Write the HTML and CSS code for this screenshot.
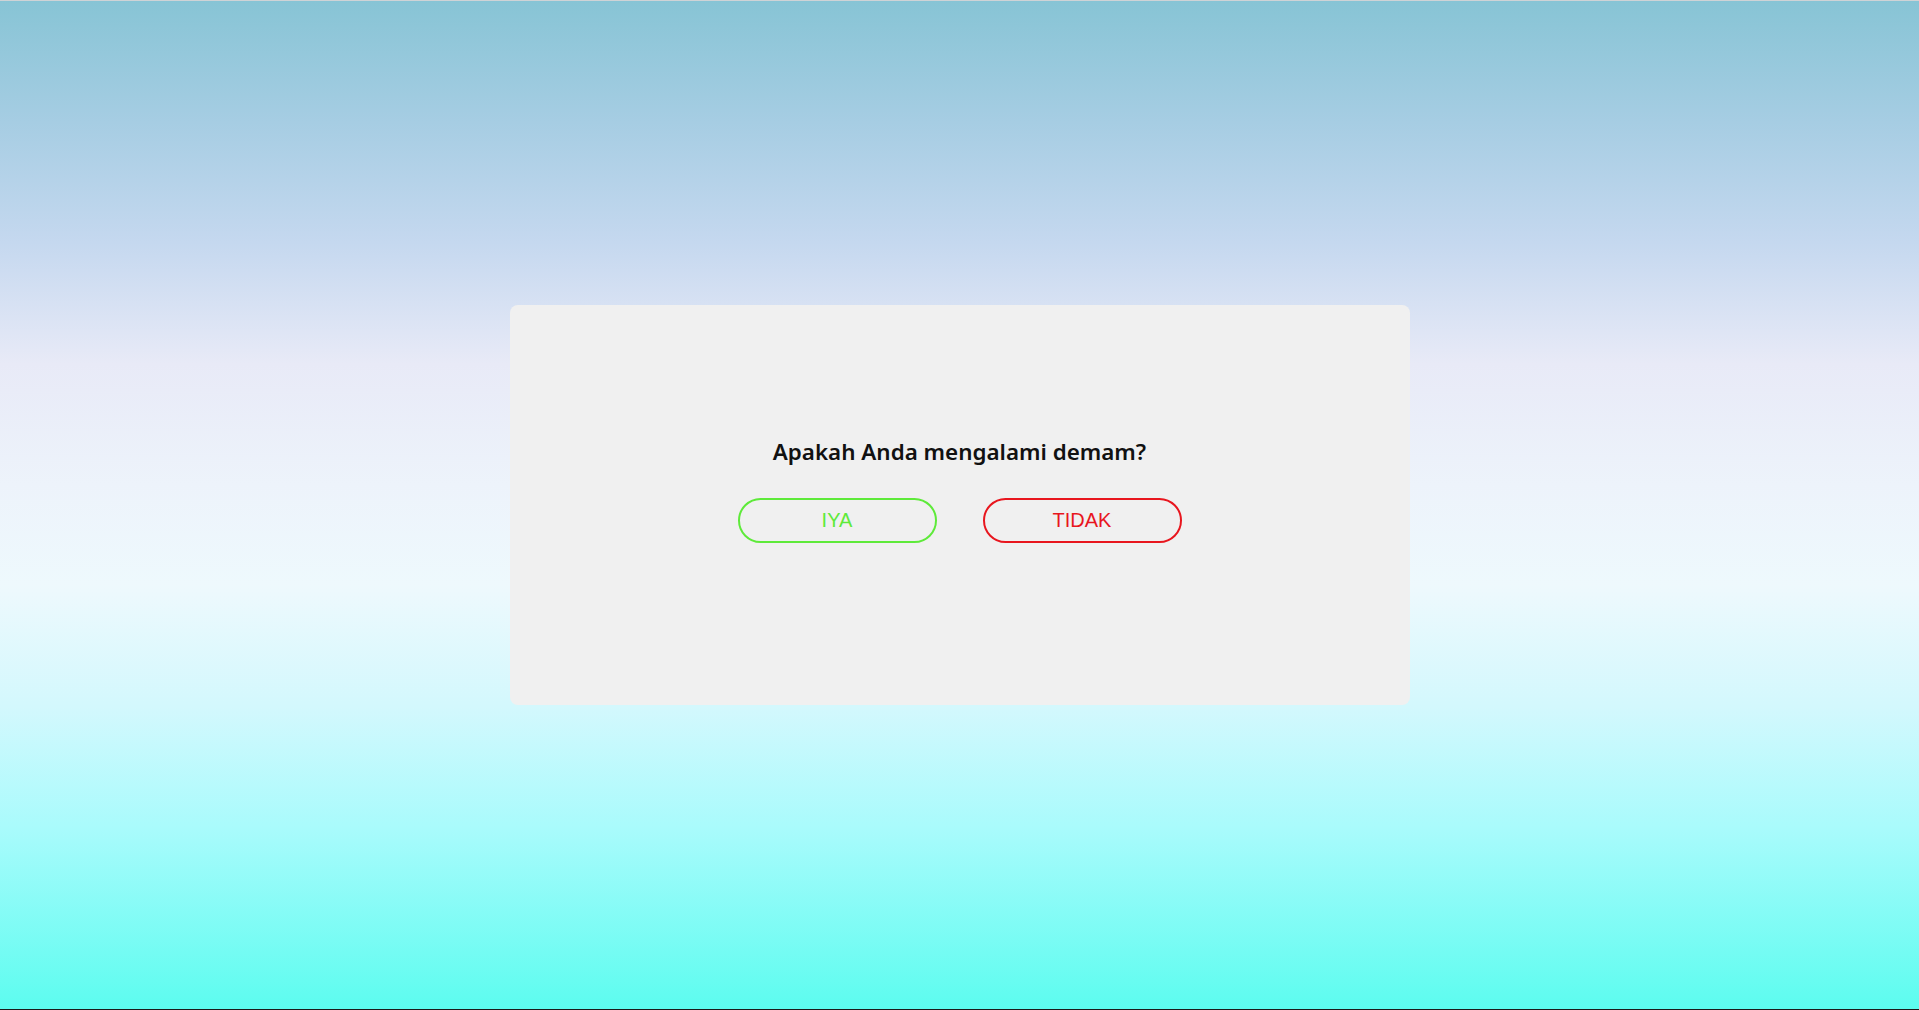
FILE: index.html
```html
<!DOCTYPE html>
<html lang="id">
<head>
<meta charset="utf-8">
<title>Pertanyaan</title>
<link rel="stylesheet" href="styles.css">
</head>
<body>
<div class="page">
  <div class="card">
    <h2 class="question">Apakah Anda mengalami demam?</h2>
    <div class="actions">
      <button class="btn btn-yes">IYA</button>
      <button class="btn btn-no">TIDAK</button>
    </div>
  </div>
</div>
</body>
</html>
```
FILE: styles.css
```css
html, body {
  margin: 0;
  padding: 0;
  height: 100%;
}
body {
  font-family: "Liberation Sans", Arial, sans-serif;
}
.page {
  box-sizing: border-box;
  height: 1010px;
  border-top: 1px solid #cfd3d6;
  border-bottom: 1px solid #1a1a1a;
  background: linear-gradient(to bottom,
    #87c4d5 0%,
    #a6cde3 12%,
    #c5d8ef 24%,
    #e8eaf7 36%,
    #edf3fb 48%,
    #eef9fd 58%,
    #d3f8fd 70%,
    #a9fbfc 82%,
    #5cfcef 100%);
  display: flex;
  align-items: center;
  justify-content: center;
}
.card {
  width: 900px;
  height: 400px;
  background: #f0f0f0;
  border-radius: 8px;
  display: flex;
  flex-direction: column;
  align-items: center;
  justify-content: center;
  padding-bottom: 32px;
  box-sizing: border-box;
}
.question {
  margin: 0 0 31px 0;
  font-family: "Noto Sans", "Open Sans", sans-serif;
  font-weight: 600;
  font-size: 22.4px;
  color: #111;
}
.actions {
  display: flex;
  gap: 46px;
}
.btn {
  width: 199px;
  height: 45px;
  border-radius: 23px;
  background: transparent;
  font-family: "Liberation Sans", Arial, sans-serif;
  font-size: 20px;
  padding: 0;
  cursor: pointer;
}
.btn-yes {
  border: 2px solid #5eea3a;
  color: #5eea3a;
}
.btn-no {
  border: 2px solid #e8161e;
  color: #e8161e;
}
```
